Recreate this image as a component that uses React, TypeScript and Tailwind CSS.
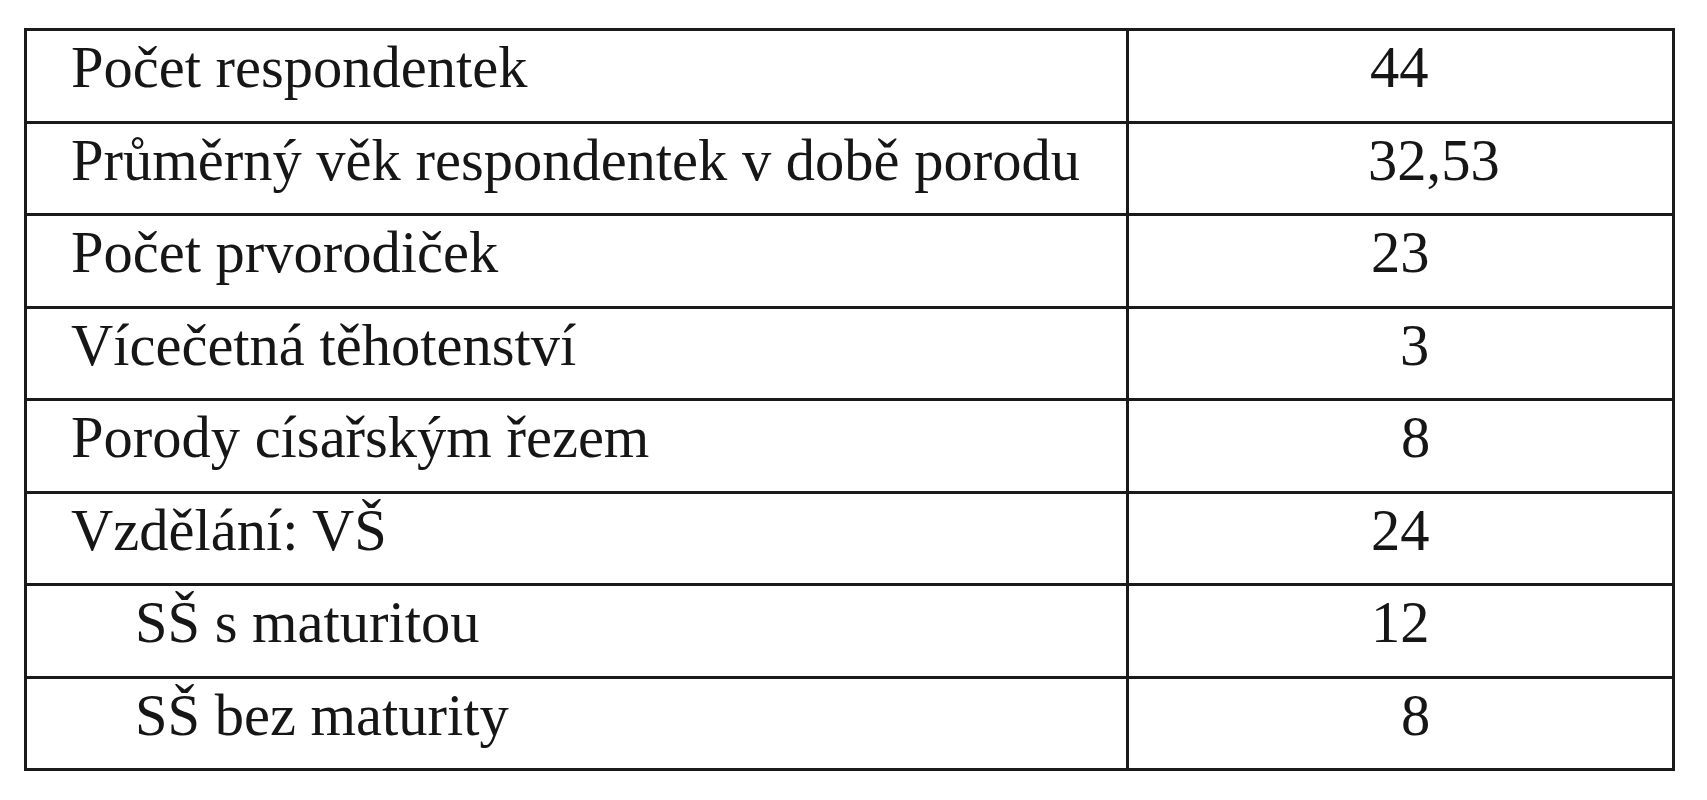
const rows: { label: string; value: string; indent?: boolean; valuePad: string }[] = [
  { label: 'Počet respondentek', value: '44', valuePad: 'pl-[241px]' },
  { label: 'Průměrný věk respondentek v době porodu', value: '32,53', valuePad: 'pl-[239px]' },
  { label: 'Počet prvorodiček', value: '23', valuePad: 'pl-[242px]' },
  { label: 'Vícečetná těhotenství', value: '3', valuePad: 'pl-[271px]' },
  { label: 'Porody císařským řezem', value: '8', valuePad: 'pl-[272px]' },
  { label: 'Vzdělání: VŠ', value: '24', valuePad: 'pl-[242px]' },
  { label: 'SŠ s maturitou', value: '12', indent: true, valuePad: 'pl-[242px]' },
  { label: 'SŠ bez maturity', value: '8', indent: true, valuePad: 'pl-[272px]' },
];

export default function App() {
  return (
    <div className="w-[1707px] h-[800px] bg-white pt-[28px] pl-[24px] font-['Liberation_Serif',serif] text-[58.5px] leading-[58px] text-[#161616]">
      <div className="w-[1651px] border-x-[3px] border-b-[3px] border-[#1a1a1a]">
        {rows.map((r) => (
          <div
            key={r.label}
            className="grid grid-cols-[1099px_1fr] h-[92.5px] border-t-[3px] border-[#1a1a1a]"
          >
            <div className={`pt-[8px] whitespace-nowrap ${r.indent ? 'pl-[108px]' : 'pl-[44px]'}`}>
              {r.label}
            </div>
            <div className={`pt-[8px] border-l-[3px] border-[#1a1a1a] ${r.valuePad}`}>
              {r.value}
            </div>
          </div>
        ))}
      </div>
    </div>
  );
}
